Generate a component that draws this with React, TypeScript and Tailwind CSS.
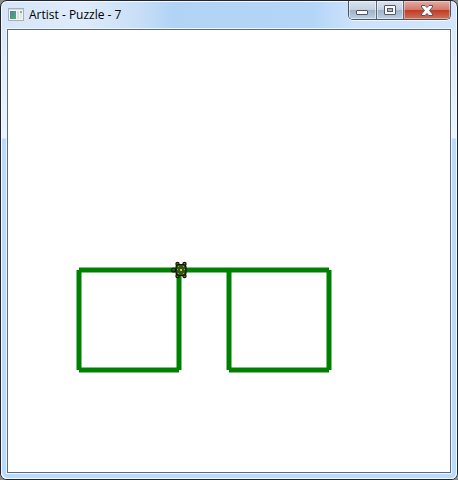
import React from 'react'

const strokes = [
  { x1: 71, y1: 240, x2: 321, y2: 240 },
  { x1: 71, y1: 240, x2: 71, y2: 340 },
  { x1: 71, y1: 340, x2: 171, y2: 340 },
  { x1: 171, y1: 240, x2: 171, y2: 340 },
  { x1: 221, y1: 240, x2: 221, y2: 340 },
  { x1: 221, y1: 340, x2: 321, y2: 340 },
  { x1: 321, y1: 240, x2: 321, y2: 340 },
]

const AppIcon = () => {
  return (
    <svg width="16" height="14" viewBox="0 0 16 14" aria-hidden="true">
      <defs>
        <linearGradient id="pane" x1="0" y1="0" x2="1" y2="1">
          <stop offset="0" stopColor="#4a80a8" />
          <stop offset="1" stopColor="#4fb36a" />
        </linearGradient>
      </defs>
      <rect x="0.5" y="0.5" width="15" height="12" fill="#f4f4f4" stroke="#a9b0b6" />
      <rect x="1" y="1" width="14" height="1" fill="#d5d9dc" />
      <rect x="2" y="3" width="6" height="8" fill="url(#pane)" />
      <rect x="9" y="3" width="2" height="8" fill="#dcdfe2" />
      <rect x="12" y="3" width="2" height="2" fill="#7fb6a4" />
      <rect x="12" y="5" width="2" height="6" fill="#e4e6e8" />
    </svg>
  )
}

const Turtle = () => {
  return (
    <g>
      {/* LEGS */}
      <g fill="#8a7a14" stroke="#141402" strokeWidth="1.2">
        <circle cx="169.5" cy="234" r="1.6" />
        <circle cx="176.5" cy="234" r="1.6" />
        <circle cx="169.5" cy="246" r="1.6" />
        <circle cx="176.5" cy="246" r="1.6" />
      </g>
      {/* HEAD */}
      <circle cx="165.5" cy="240" r="2" fill="#1f6a12" stroke="#0a1a05" strokeWidth="1.2" />
      {/* SHELL */}
      <rect x="168" y="234.5" width="10" height="11" rx="3" fill="#35521f" stroke="#0d1406" strokeWidth="1.2" />
      <g fill="#8fc01a">
        <rect x="170" y="236" width="1" height="1" />
        <rect x="175" y="236" width="1" height="1" />
        <rect x="169" y="239" width="1" height="1" />
        <rect x="176" y="239" width="1" height="1" />
        <rect x="170" y="243" width="1" height="1" />
        <rect x="175" y="243" width="1" height="1" />
        <rect x="172" y="239" width="2" height="2" fill="#a4f00c" />
      </g>
    </g>
  )
}

const TitleBar = () => {
  return (
    <header className="flex h-7 items-start justify-between pl-[7px] pr-[6px]">
      {/* LEFT */}
      <div className="flex h-7 items-center gap-[5px]">
        <AppIcon />
        <h1 className="font-['Open_Sans',sans-serif] text-[12px] leading-4 text-black">Artist - Puzzle - 7</h1>
      </div>
      {/* RIGHT */}
      <div className="flex h-[19px] overflow-hidden rounded-b-[5px] border border-t-0 border-[#4a5767] shadow-[0_1px_0_#ffffffb0]">
        <button
          aria-label="Minimize"
          className="flex w-7 items-center justify-center border-r border-[#5b6878] bg-[linear-gradient(#d9e4f0_0%,#c3d0df_48%,#9fb1c6_50%,#bccfe3_100%)] shadow-[inset_0_0_0_1px_#ffffff80]"
        >
          <svg width="13" height="11" viewBox="0 0 13 11">
            <rect x="0.5" y="5.5" width="11" height="4" rx="0.5" fill="#fafafa" stroke="#535666" />
          </svg>
        </button>
        <button
          aria-label="Maximize"
          className="flex w-[27px] items-center justify-center border-r border-[#5b6878] bg-[linear-gradient(#d9e4f0_0%,#c3d0df_48%,#9fb1c6_50%,#bccfe3_100%)] shadow-[inset_0_0_0_1px_#ffffff80]"
        >
          <svg width="12" height="10" viewBox="0 0 12 10">
            <rect x="0.5" y="0.5" width="11" height="9" rx="0.5" fill="#fafafa" stroke="#535666" />
            <rect x="3.5" y="3.5" width="5" height="3" fill="#a9bbd0" stroke="#535666" />
          </svg>
        </button>
        <button
          aria-label="Close"
          className="flex w-[46px] items-center justify-center bg-[linear-gradient(#e6aca2_0%,#d4786a_48%,#bd3a24_50%,#d4705a_100%)] shadow-[inset_0_0_0_1px_#ffffff60]"
        >
          <svg width="12" height="11" viewBox="0 0 12 11">
            <path
              d="M.5 .5h3.5l2 2 2-2h3.5V2L8.5 5.5l3 3.5v1.5H8l-2-2-2 2H.5V9l3-3.5L.5 2z"
              fill="#fafafa"
              stroke="#535666"
            />
          </svg>
        </button>
      </div>
    </header>
  )
}

const App = () => {
  return (
    <div className="bg-[#8c8c8c]">
      <div className="rounded-[7px] border border-[#20242e] bg-[linear-gradient(90deg,#d6e6f8_0%,#deebfa_18%,#c8dff6_30%,#b1d3f5_38%,#b3d5f8_68%,#cbe2fb_77%,#d3e6fb_100%)] bg-[length:100%_28px] bg-no-repeat shadow-[inset_0_0_0_1px_#f4faff]">
        <TitleBar />
        {/* CANVAS */}
        <div className="rounded-b-[6px] bg-[linear-gradient(#d9e9fa_0px,#eaf3fd_109px,#b9dafb_110px)] px-[6px] pb-[6px] shadow-[inset_1px_-1px_0_#f4faff,inset_-1px_0_0_#f4faff]">
          <main className="border border-[#5c6b7b] bg-white shadow-[0_0_0_1px_#eef7ff]">
            <svg className="block w-full" viewBox="0 0 442 442" role="img" aria-label="Drawing">
              <g stroke="#008000" strokeWidth="5">
                {strokes.map((s, i) => (
                  <line key={i} {...s} />
                ))}
              </g>
              <Turtle />
            </svg>
          </main>
        </div>
      </div>
    </div>
  )
}

export default App
